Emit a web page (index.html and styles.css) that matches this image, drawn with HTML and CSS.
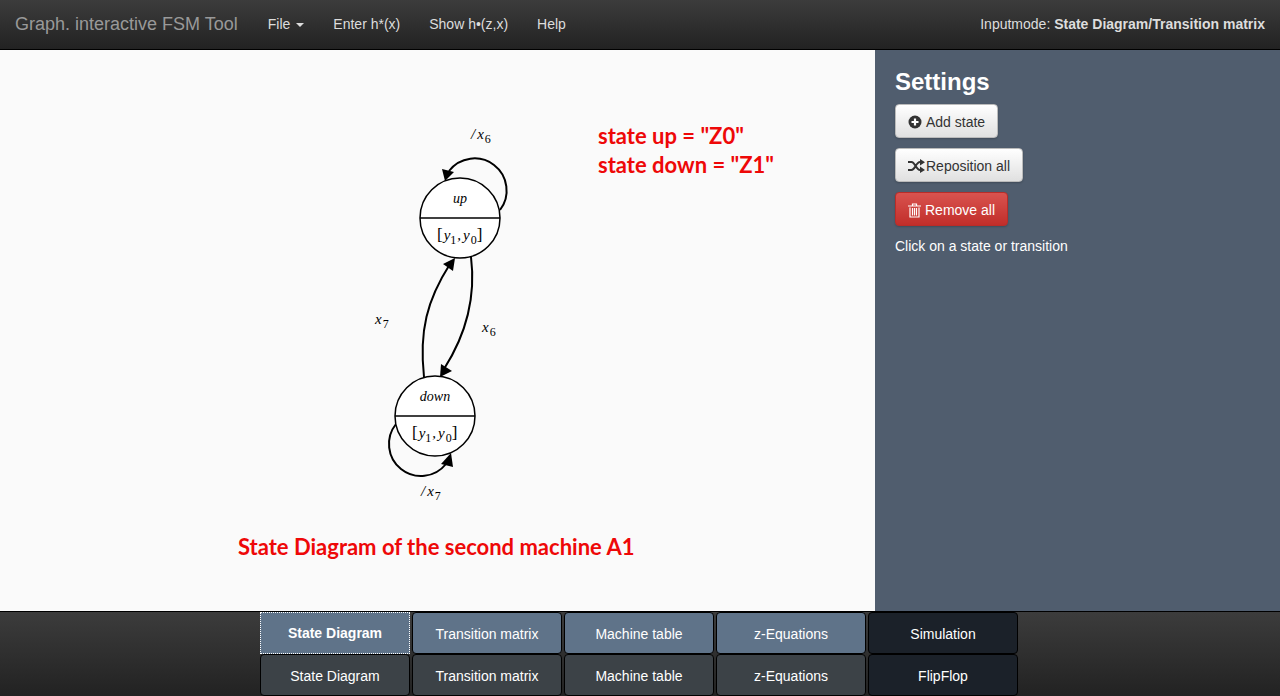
FILE: index.html
```html
<!DOCTYPE html>
<html lang="en">
<head>
<meta charset="utf-8">
<title>Graph. interactive FSM Tool</title>
<link rel="stylesheet" href="styles.css">
</head>
<body>
<header class="navbar">
  <a class="brand" href="#">Graph. interactive FSM Tool</a>
  <nav class="menu">
    <a href="#">File<span class="caret"></span></a>
    <a href="#">Enter h*(x)</a>
    <a href="#">Show h•(z,x)</a>
    <a href="#">Help</a>
  </nav>
  <p class="mode">Inputmode: <strong>State Diagram/Transition matrix</strong></p>
</header>

<main class="workspace">
  <section class="canvas" aria-label="State diagram">
    <svg class="diagram" width="875" height="560" viewBox="0 0 875 560">
      <g class="edge">
        <path d="M500 160A32 32 0 0 0 449 121"/>
        <path d="M396 374A32 32 0 0 0 446 414"/>
        <path d="M471 207C476 247 467 283 444 319"/>
        <path d="M424 327C419 281 427 250 450 214"/>
      </g>
      <g class="arrow">
        <path d="M445 131L442 119L454 122Z"/>
        <path d="M451 403L441 414L453 417Z"/>
        <path d="M440 327L441 314L452 321Z"/>
        <path d="M455 208L443 214L453 221Z"/>
      </g>
      <g class="state">
        <circle cx="460" cy="168" r="40"/>
        <path d="M420 168H500"/>
        <circle cx="435" cy="366" r="40"/>
        <path d="M395 366H475"/>
      </g>
      <g class="name">
        <text x="460" y="153">up</text>
        <text x="435" y="351">down</text>
      </g>
      <g class="math">
        <text x="437" y="190"><tspan class="bracket">[</tspan><tspan dx="1">y</tspan><tspan class="sub" dy="4">1</tspan><tspan dx="1" dy="-4">,</tspan><tspan dx="2">y</tspan><tspan class="sub" dx="1" dy="4">0</tspan><tspan class="bracket" dy="-4">]</tspan></text>
        <text x="412" y="388"><tspan class="bracket">[</tspan><tspan dx="1">y</tspan><tspan class="sub" dy="4">1</tspan><tspan dx="1" dy="-4">,</tspan><tspan dx="2">y</tspan><tspan class="sub" dx="1" dy="4">0</tspan><tspan class="bracket" dy="-4">]</tspan></text>
        <text x="471" y="89">/<tspan dx="2">x</tspan><tspan class="sub" dx="1" dy="4">6</tspan></text>
        <text x="421" y="446">/<tspan dx="2">x</tspan><tspan class="sub" dx="1" dy="4">7</tspan></text>
        <text x="375" y="274">x<tspan class="sub" dx="1" dy="4">7</tspan></text>
        <text x="482" y="282">x<tspan class="sub" dx="1" dy="4">6</tspan></text>
      </g>
      <g class="note">
        <text x="598" y="94">state up = "Z0"</text>
        <text x="598" y="123">state down = "Z1"</text>
        <text x="238" y="505">State Diagram of the second machine A1</text>
      </g>
    </svg>
  </section>

  <aside class="settings">
    <h1>Settings</h1>
    <button class="btn" type="button">
      <svg width="14" height="14" viewBox="0 0 14 14"><circle cx="7" cy="7" r="6.5" fill="#333"/><path d="M7 3.5V10.500M3.500 7H10.500" stroke="#fff" stroke-width="2.200"/></svg>
      <span>Add state</span>
    </button>
    <button class="btn tight" type="button">
      <svg width="17" height="14" viewBox="0 0 17 14"><path d="M0 3H3.500C7 3 8 11 12 11H13M0 11H3.500C7 11 8 3 12 3H13" fill="none" stroke="#333" stroke-width="2"/><path d="M12 0L17 3.200L12 6.500ZM12 7.500L17 11L12 14Z" fill="#333"/></svg>
      <span>Reposition all</span>
    </button>
    <button class="btn danger" type="button">
      <svg width="13" height="15" viewBox="0 0 13 15"><path d="M0 3H13M4.500 3V1H8.500V3M2 4.500V14H11V4.500M4.500 5V12.500M6.500 5V12.500M8.500 5V12.500" fill="none" stroke="#fff" stroke-width="1.200"/></svg>
      <span>Remove all</span>
    </button>
    <p>Click on a state or transition</p>
  </aside>
</main>

<footer class="tabbar">
  <div class="tabs">
    <button class="tab blue active" type="button">State Diagram</button>
    <button class="tab blue" type="button">Transition matrix</button>
    <button class="tab blue" type="button">Machine table</button>
    <button class="tab blue" type="button">z-Equations</button>
    <button class="tab dark" type="button">Simulation</button>
    <button class="tab" type="button">State Diagram</button>
    <button class="tab" type="button">Transition matrix</button>
    <button class="tab" type="button">Machine table</button>
    <button class="tab" type="button">z-Equations</button>
    <button class="tab dark" type="button">FlipFlop</button>
  </div>
</footer>
</body>
</html>
```
FILE: styles.css
```css
* { box-sizing: border-box; }

body {
  margin: 0;
  min-height: 100vh;
  display: flex;
  flex-direction: column;
  background: #fafafa;
  font: 14px/20px "Liberation Sans", Arial, sans-serif;
}

.navbar {
  display: flex;
  align-items: center;
  padding: 14px 15px 15px;
  background: linear-gradient(#3c3c3c, #222);
  border-bottom: 1px solid #000;
  color: #ddd;
}

.navbar a { color: #ddd; text-decoration: none; }
.navbar .brand { font-size: 18px; color: #999; }

.menu { display: flex; gap: 29px; margin-left: 30px; }

.caret {
  display: inline-block;
  margin-left: 6px;
  vertical-align: middle;
  border: 4px solid transparent;
  border-top-color: #ddd;
  border-bottom: 0;
}

.mode { margin: 0 0 0 auto; }

.workspace { flex: 1; display: flex; }

.canvas { flex: 1; min-width: 0; overflow: hidden; }
.diagram { display: block; }

.edge path { fill: none; stroke: #000; stroke-width: 2px; }
.state circle { fill: #fff; stroke: #000; stroke-width: 1.5px; }
.state path { stroke: #000; stroke-width: 1.5px; }

.name, .math { font-family: "Liberation Serif", "Times New Roman", serif; font-style: italic; }
.name { font-size: 14px; text-anchor: middle; }
.math { font-size: 15px; }
.bracket { font-size: 17px; font-style: normal; }
.sub { font-size: 12px; font-style: normal; }
.note { font: bold 22px Lato, sans-serif; fill: #ee0808; }

.settings {
  flex: 0 0 405px;
  display: flex;
  flex-direction: column;
  align-items: flex-start;
  gap: 10px;
  padding: 20px;
  background: #505d6e;
  color: #fff;
}

.settings h1 { margin: 0; font-size: 24px; line-height: 24px; }
.settings p { margin: 0; }

.btn {
  display: flex;
  align-items: center;
  gap: 4px;
  height: 34px;
  padding: 2px 12px 0;
  border: 1px solid #bbb;
  border-radius: 4px;
  background: linear-gradient(#fff, #e0e0e0);
  box-shadow: 0 1px 2px rgba(0, 0, 0, 0.2);
  color: #333;
  font: inherit;
}

.btn.tight { gap: 1px; }

.btn.danger {
  border-color: #b92c28;
  background: linear-gradient(#d9534f, #c12e2a);
  color: #fff;
}

.tabbar {
  display: flex;
  justify-content: center;
  padding-right: 2px;
  border-top: 1px solid #000;
  background: linear-gradient(#3c3c3c, #222);
}

.tabs {
  display: grid;
  grid-template-columns: repeat(5, 150px);
  column-gap: 2px;
}

.tab {
  height: 42px;
  padding: 2px 0 0;
  border: 1px solid #000;
  border-radius: 4px;
  background: #3c4247;
  color: #fff;
  font: inherit;
}

.tab.blue { background: #5f7389; }
.tab.dark { background: #1b2129; }
.tab.active { padding: 0; border: 1px dotted #fff; border-radius: 0; font-weight: bold; }
```
